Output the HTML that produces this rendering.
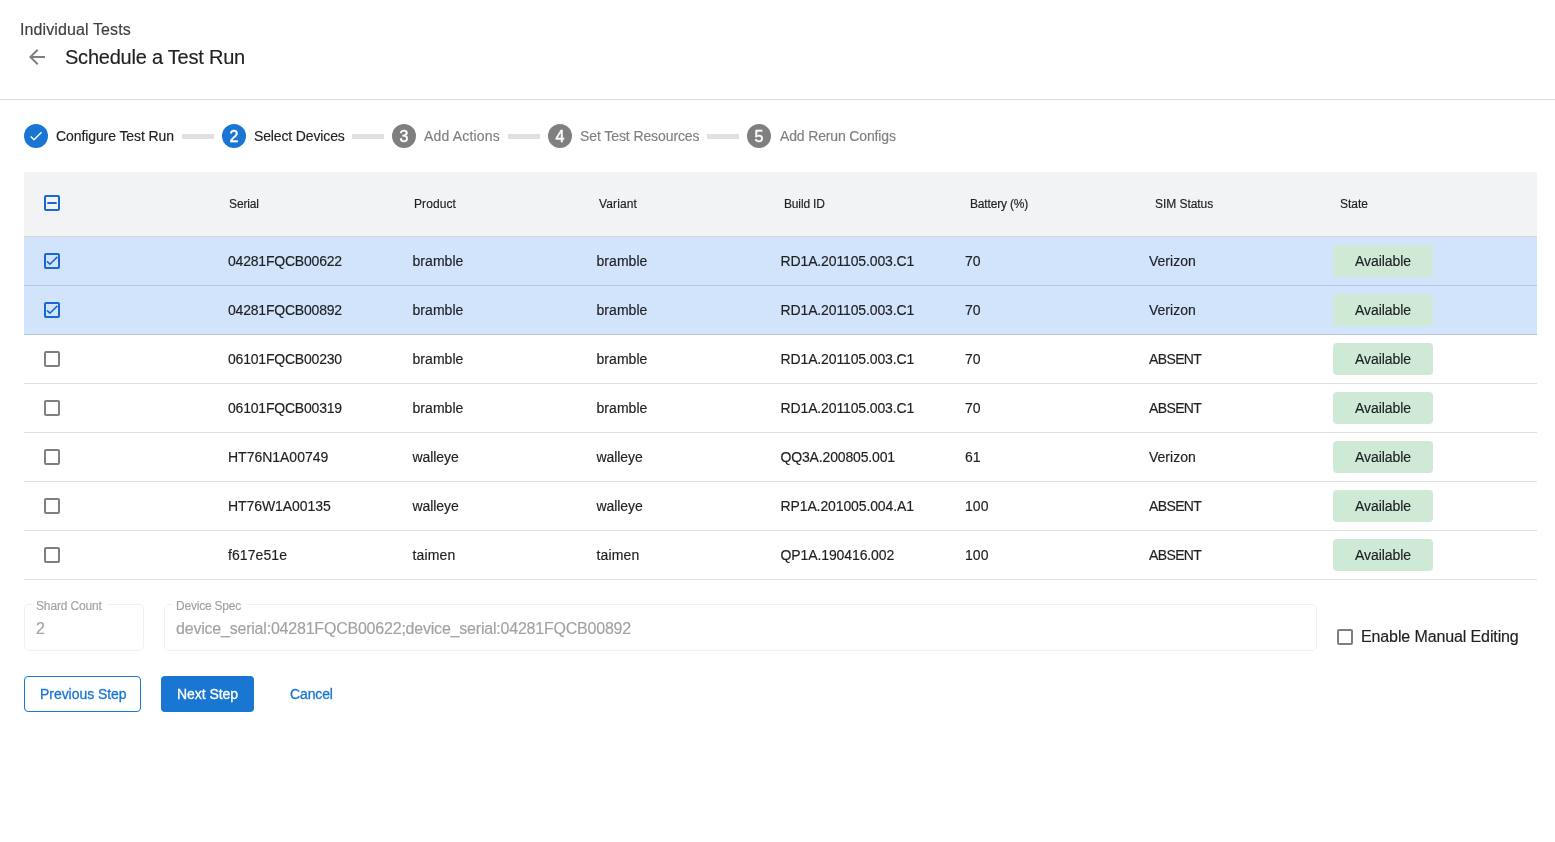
<!DOCTYPE html>
<html><head><meta charset="utf-8">
<style>
html,body{margin:0;padding:0;background:#fff;}
body{width:1555px;height:842px;position:relative;overflow:hidden;font-family:"Liberation Sans",sans-serif;color:#202124;}
.t{position:absolute;white-space:nowrap;line-height:1;-webkit-text-stroke:0.15px currentColor;}
#wrap{position:absolute;left:0;top:0;width:1555px;height:842px;will-change:transform;}
.hline{position:absolute;left:0;width:1555px;top:99px;height:1px;background:#dadce0;}
.circ{position:absolute;top:124px;width:24px;height:24px;border-radius:50%;}
.blue{background:#1976d2;}
.grey{background:#7f7f7f;}
.conn{position:absolute;top:134px;height:5px;width:32px;background:#e0e0e0;}
.thead{position:absolute;left:24px;top:172px;width:1513px;height:64px;background:#f1f3f4;border-bottom:1px solid #d3d5d8;}
.row{position:absolute;left:24px;width:1513px;height:48px;border-bottom:1px solid #e0e0e0;}
.row.sel{background:#d2e3fc;border-bottom-color:#b8c8e0;}
.cb{position:absolute;left:44px;width:12px;height:12px;border:2px solid #7f7f7f;border-radius:2px;}
.cb.on{border-color:#1967d2;}
.chip{position:absolute;left:1333px;width:100px;height:32px;border-radius:4px;background:#ceead6;}
.fld{position:absolute;border:1px solid #f0f0f0;border-radius:5px;}
.gap{position:absolute;background:#fff;height:3px;}
</style></head><body><div id="wrap">
<svg style="position:absolute;left:25px;top:45px" width="24" height="24" viewBox="0 0 24 24"><path fill="#7f7f7f" d="M20 11H7.83l5.59-5.59L12 4l-8 8 8 8 1.41-1.41L7.83 13H20v-2z"/></svg>
<div class="hline"></div>
<div class="circ blue" style="left:24px;"><svg style="position:absolute;left:4px;top:4px" width="16" height="16" viewBox="0 0 24 24"><path fill="#fff" d="M9 16.17L4.83 12l-1.42 1.41L9 19 21 7l-1.41-1.41z"/></svg></div>
<div class="conn" style="left:182px;"></div>
<div class="circ blue" style="left:222px;"></div>
<div class="conn" style="left:352px;"></div>
<div class="circ grey" style="left:392px;"></div>
<div class="conn" style="left:508px;"></div>
<div class="circ grey" style="left:548px;"></div>
<div class="conn" style="left:707px;"></div>
<div class="circ grey" style="left:747px;"></div>
<div class="thead"></div>
<div class="cb on" style="top:195px;"><div style="position:absolute;left:1px;top:5px;width:10px;height:2px;border-radius:1px;background:#1967d2;"></div></div>
<div class="row sel" style="top:237px;"></div>
<div class="cb on" style="top:253px;"><svg style="position:absolute;left:-2px;top:-2px" width="16" height="16" viewBox="0 0 16 16"><path fill="none" stroke="#1967d2" stroke-width="1.6" d="M3 8.4L5.9 11.2 13.4 3.9"/></svg></div>
<div class="chip" style="top:245px;"></div>
<div class="row sel" style="top:286px;"></div>
<div class="cb on" style="top:302px;"><svg style="position:absolute;left:-2px;top:-2px" width="16" height="16" viewBox="0 0 16 16"><path fill="none" stroke="#1967d2" stroke-width="1.6" d="M3 8.4L5.9 11.2 13.4 3.9"/></svg></div>
<div class="chip" style="top:294px;"></div>
<div class="row" style="top:335px;"></div>
<div class="cb" style="top:351px;"></div>
<div class="chip" style="top:343px;"></div>
<div class="row" style="top:384px;"></div>
<div class="cb" style="top:400px;"></div>
<div class="chip" style="top:392px;"></div>
<div class="row" style="top:433px;"></div>
<div class="cb" style="top:449px;"></div>
<div class="chip" style="top:441px;"></div>
<div class="row" style="top:482px;"></div>
<div class="cb" style="top:498px;"></div>
<div class="chip" style="top:490px;"></div>
<div class="row" style="top:531px;"></div>
<div class="cb" style="top:547px;"></div>
<div class="chip" style="top:539px;"></div>
<div class="fld" style="left:24px;top:604px;width:118px;height:45px;"></div>
<div class="gap" style="left:32px;top:602px;width:76px;"></div>
<div class="fld" style="left:164px;top:604px;width:1151px;height:45px;"></div>
<div class="gap" style="left:172px;top:602px;width:75px;"></div>
<div class="cb" style="left:1337px;top:629px;"></div>
<div style="position:absolute;left:24px;top:676px;width:115px;height:34px;border:1px solid #1976d2;border-radius:4px;"></div>
<div style="position:absolute;left:161px;top:676px;width:93px;height:36px;background:#1976d2;border-radius:4px;"></div>
<div class="t" id="indiv" style="top:22px;font-size:16px;left:20px;letter-spacing:0.108px;color:#3c4043;">Individual Tests</div>
<div class="t" id="title" style="top:47px;font-size:20px;left:65px;letter-spacing:-0.224px;color:#202124;">Schedule a Test Run</div>
<div class="t" id="s1" style="top:129px;font-size:14px;left:56px;letter-spacing:-0.096px;color:#202124;">Configure Test Run</div>
<div class="t" id="n2" style="top:129px;font-size:16px;left:229.45px;color:#fff;-webkit-text-stroke:0.5px currentColor;">2</div>
<div class="t" id="s2" style="top:129px;font-size:14px;left:254px;letter-spacing:-0.140px;color:#202124;">Select Devices</div>
<div class="t" id="n3" style="top:129px;font-size:16px;left:399.45px;color:#fff;-webkit-text-stroke:0.5px currentColor;">3</div>
<div class="t" id="s3" style="top:129px;font-size:14px;left:424px;letter-spacing:0.169px;color:#7f7f7f;">Add Actions</div>
<div class="t" id="n4" style="top:129px;font-size:16px;left:555.45px;color:#fff;-webkit-text-stroke:0.5px currentColor;">4</div>
<div class="t" id="s4" style="top:129px;font-size:14px;left:580px;letter-spacing:-0.093px;color:#7f7f7f;">Set Test Resources</div>
<div class="t" id="n5" style="top:129px;font-size:16px;left:754.45px;color:#fff;-webkit-text-stroke:0.5px currentColor;">5</div>
<div class="t" id="s5" style="top:129px;font-size:14px;left:780px;letter-spacing:-0.147px;color:#7f7f7f;">Add Rerun Configs</div>
<div class="t" id="h0" style="top:198px;font-size:12px;left:229px;letter-spacing:-0.128px;color:#202124;">Serial</div>
<div class="t" id="h1" style="top:198px;font-size:12px;left:414px;letter-spacing:0.085px;color:#202124;">Product</div>
<div class="t" id="h2" style="top:198px;font-size:12px;left:599px;letter-spacing:0.118px;color:#202124;">Variant</div>
<div class="t" id="h3" style="top:198px;font-size:12px;left:784px;letter-spacing:-0.152px;color:#202124;">Build ID</div>
<div class="t" id="h4" style="top:198px;font-size:12px;left:970px;letter-spacing:-0.172px;color:#202124;">Battery (%)</div>
<div class="t" id="h5" style="top:198px;font-size:12px;left:1155px;letter-spacing:-0.053px;color:#202124;">SIM Status</div>
<div class="t" id="h6" style="top:198px;font-size:12px;left:1340px;letter-spacing:-0.031px;color:#202124;">State</div>
<div class="t" id="r0c0" style="top:254px;font-size:14px;left:228px;letter-spacing:-0.205px;color:#202124;">04281FQCB00622</div>
<div class="t" id="r0c1" style="top:254px;font-size:14px;left:412.5px;letter-spacing:0.047px;color:#202124;">bramble</div>
<div class="t" id="r0c2" style="top:254px;font-size:14px;left:596.5px;letter-spacing:0.047px;color:#202124;">bramble</div>
<div class="t" id="r0c3" style="top:254px;font-size:14px;left:780.5px;letter-spacing:-0.126px;color:#202124;">RD1A.201105.003.C1</div>
<div class="t" id="r0c4" style="top:254px;font-size:14px;left:965px;letter-spacing:0.086px;color:#202124;">70</div>
<div class="t" id="r0c5" style="top:254px;font-size:14px;left:1149px;letter-spacing:0.007px;color:#202124;">Verizon</div>
<div class="t" id="r0chip" style="top:254px;font-size:14px;left:1354.90px;letter-spacing:-0.040px;color:#202124;">Available</div>
<div class="t" id="r1c0" style="top:303px;font-size:14px;left:228px;letter-spacing:-0.205px;color:#202124;">04281FQCB00892</div>
<div class="t" id="r1c1" style="top:303px;font-size:14px;left:412.5px;letter-spacing:0.047px;color:#202124;">bramble</div>
<div class="t" id="r1c2" style="top:303px;font-size:14px;left:596.5px;letter-spacing:0.047px;color:#202124;">bramble</div>
<div class="t" id="r1c3" style="top:303px;font-size:14px;left:780.5px;letter-spacing:-0.126px;color:#202124;">RD1A.201105.003.C1</div>
<div class="t" id="r1c4" style="top:303px;font-size:14px;left:965px;letter-spacing:0.086px;color:#202124;">70</div>
<div class="t" id="r1c5" style="top:303px;font-size:14px;left:1149px;letter-spacing:0.007px;color:#202124;">Verizon</div>
<div class="t" id="r1chip" style="top:303px;font-size:14px;left:1354.90px;letter-spacing:-0.040px;color:#202124;">Available</div>
<div class="t" id="r2c0" style="top:352px;font-size:14px;left:228px;letter-spacing:-0.205px;color:#202124;">06101FQCB00230</div>
<div class="t" id="r2c1" style="top:352px;font-size:14px;left:412.5px;letter-spacing:0.047px;color:#202124;">bramble</div>
<div class="t" id="r2c2" style="top:352px;font-size:14px;left:596.5px;letter-spacing:0.047px;color:#202124;">bramble</div>
<div class="t" id="r2c3" style="top:352px;font-size:14px;left:780.5px;letter-spacing:-0.126px;color:#202124;">RD1A.201105.003.C1</div>
<div class="t" id="r2c4" style="top:352px;font-size:14px;left:965px;letter-spacing:0.086px;color:#202124;">70</div>
<div class="t" id="r2c5" style="top:352px;font-size:14px;left:1149px;letter-spacing:-0.622px;color:#202124;">ABSENT</div>
<div class="t" id="r2chip" style="top:352px;font-size:14px;left:1354.90px;letter-spacing:-0.040px;color:#202124;">Available</div>
<div class="t" id="r3c0" style="top:401px;font-size:14px;left:228px;letter-spacing:-0.205px;color:#202124;">06101FQCB00319</div>
<div class="t" id="r3c1" style="top:401px;font-size:14px;left:412.5px;letter-spacing:0.047px;color:#202124;">bramble</div>
<div class="t" id="r3c2" style="top:401px;font-size:14px;left:596.5px;letter-spacing:0.047px;color:#202124;">bramble</div>
<div class="t" id="r3c3" style="top:401px;font-size:14px;left:780.5px;letter-spacing:-0.126px;color:#202124;">RD1A.201105.003.C1</div>
<div class="t" id="r3c4" style="top:401px;font-size:14px;left:965px;letter-spacing:0.086px;color:#202124;">70</div>
<div class="t" id="r3c5" style="top:401px;font-size:14px;left:1149px;letter-spacing:-0.622px;color:#202124;">ABSENT</div>
<div class="t" id="r3chip" style="top:401px;font-size:14px;left:1354.90px;letter-spacing:-0.040px;color:#202124;">Available</div>
<div class="t" id="r4c0" style="top:450px;font-size:14px;left:228px;letter-spacing:-0.016px;color:#202124;">HT76N1A00749</div>
<div class="t" id="r4c1" style="top:450px;font-size:14px;left:412.5px;letter-spacing:-0.065px;color:#202124;">walleye</div>
<div class="t" id="r4c2" style="top:450px;font-size:14px;left:596.5px;letter-spacing:-0.065px;color:#202124;">walleye</div>
<div class="t" id="r4c3" style="top:450px;font-size:14px;left:780.5px;letter-spacing:-0.153px;color:#202124;">QQ3A.200805.001</div>
<div class="t" id="r4c4" style="top:450px;font-size:14px;left:965px;letter-spacing:0.086px;color:#202124;">61</div>
<div class="t" id="r4c5" style="top:450px;font-size:14px;left:1149px;letter-spacing:0.007px;color:#202124;">Verizon</div>
<div class="t" id="r4chip" style="top:450px;font-size:14px;left:1354.90px;letter-spacing:-0.040px;color:#202124;">Available</div>
<div class="t" id="r5c0" style="top:499px;font-size:14px;left:228px;letter-spacing:-0.072px;color:#202124;">HT76W1A00135</div>
<div class="t" id="r5c1" style="top:499px;font-size:14px;left:412.5px;letter-spacing:-0.065px;color:#202124;">walleye</div>
<div class="t" id="r5c2" style="top:499px;font-size:14px;left:596.5px;letter-spacing:-0.065px;color:#202124;">walleye</div>
<div class="t" id="r5c3" style="top:499px;font-size:14px;left:780.5px;letter-spacing:-0.116px;color:#202124;">RP1A.201005.004.A1</div>
<div class="t" id="r5c4" style="top:499px;font-size:14px;left:965px;letter-spacing:0.083px;color:#202124;">100</div>
<div class="t" id="r5c5" style="top:499px;font-size:14px;left:1149px;letter-spacing:-0.622px;color:#202124;">ABSENT</div>
<div class="t" id="r5chip" style="top:499px;font-size:14px;left:1354.90px;letter-spacing:-0.040px;color:#202124;">Available</div>
<div class="t" id="r6c0" style="top:548px;font-size:14px;left:228px;letter-spacing:0.082px;color:#202124;">f617e51e</div>
<div class="t" id="r6c1" style="top:548px;font-size:14px;left:412.5px;letter-spacing:0.169px;color:#202124;">taimen</div>
<div class="t" id="r6c2" style="top:548px;font-size:14px;left:596.5px;letter-spacing:0.169px;color:#202124;">taimen</div>
<div class="t" id="r6c3" style="top:548px;font-size:14px;left:780.5px;letter-spacing:-0.103px;color:#202124;">QP1A.190416.002</div>
<div class="t" id="r6c4" style="top:548px;font-size:14px;left:965px;letter-spacing:0.083px;color:#202124;">100</div>
<div class="t" id="r6c5" style="top:548px;font-size:14px;left:1149px;letter-spacing:-0.622px;color:#202124;">ABSENT</div>
<div class="t" id="r6chip" style="top:548px;font-size:14px;left:1354.90px;letter-spacing:-0.040px;color:#202124;">Available</div>
<div class="t" id="shardlab" style="top:600px;font-size:12px;left:36px;letter-spacing:-0.145px;color:#a2a2a2;">Shard Count</div>
<div class="t" id="shardval" style="top:621px;font-size:16px;left:36px;color:#a2a2a2;">2</div>
<div class="t" id="speclab" style="top:600px;font-size:12px;left:176px;letter-spacing:-0.213px;color:#a2a2a2;">Device Spec</div>
<div class="t" id="specval" style="top:621px;font-size:16px;left:176px;letter-spacing:-0.210px;color:#a2a2a2;">device_serial:04281FQCB00622;device_serial:04281FQCB00892</div>
<div class="t" id="manual" style="top:629px;font-size:16px;left:1361px;letter-spacing:-0.117px;color:#202124;">Enable Manual Editing</div>
<div class="t" id="prev" style="top:687px;font-size:14px;left:40px;letter-spacing:-0.043px;color:#1976d2;-webkit-text-stroke:0.3px currentColor;">Previous Step</div>
<div class="t" id="next" style="top:687px;font-size:14px;left:177px;letter-spacing:-0.040px;color:#fff;-webkit-text-stroke:0.3px currentColor;">Next Step</div>
<div class="t" id="cancel" style="top:687px;font-size:14px;left:290px;letter-spacing:-0.122px;color:#1976d2;-webkit-text-stroke:0.3px currentColor;">Cancel</div>
</div></body></html>
